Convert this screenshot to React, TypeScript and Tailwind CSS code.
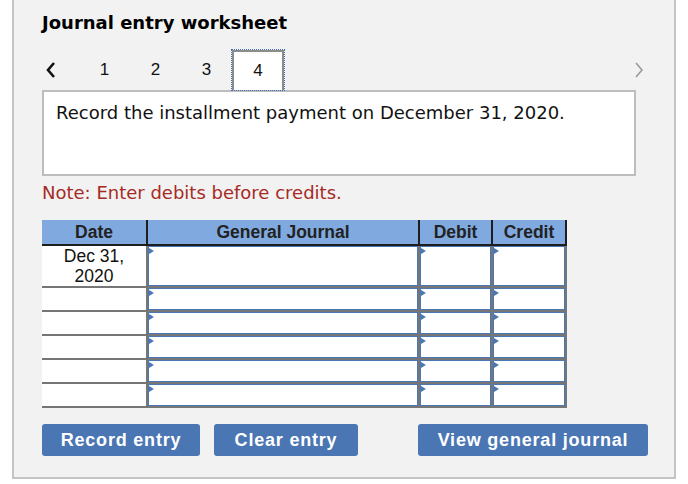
import React from 'react';

// ---------- Data ----------

const tabs = ['1', '2', '3', '4'];
const activeTab = '4';

const rows = [
  { date: 'Dec 31,\n2020', tall: true },
  { date: '', tall: false },
  { date: '', tall: false },
  { date: '', tall: false },
  { date: '', tall: false },
  { date: '', tall: false },
];

const verdana = "font-['DejaVu_Sans',Verdana,sans-serif]";
const arial = "font-['Liberation_Sans',Arial,sans-serif]";

// ---------- Pieces ----------

function EntryCell() {
  return (
    <div className="relative bg-white border border-[#4a78b4]">
      <span className="absolute left-0 top-[1px] w-0 h-0 border-y-[3px] border-y-transparent border-l-[5px] border-l-[#4a78b4]" />
    </div>
  );
}

function ActionButton({ label, width }: { label: string; width: string }) {
  return (
    <button
      className={`${width} h-[32px] rounded-[3px] bg-[#4a76b3] text-white text-[18px] font-bold tracking-[0.8px] ${arial}`}
    >
      {label}
    </button>
  );
}

// ---------- Main ----------

export default function App() {
  return (
    <div className="w-[688px] h-[484px] bg-white overflow-hidden">
      <div className="ml-[12px] w-[664px] h-[479px] bg-[#f2f2f2] border-x-2 border-b-2 border-[#c4c4c4] pl-[28px] pt-[12px]">
        <h1 className={`${verdana} text-[18px] leading-[22px] font-bold text-black`}>Journal entry worksheet</h1>

        {/* Tabs */}
        <div className="mt-[15px] flex items-end h-[42px] w-[594px] relative z-10 -mb-[1px]">
          <div className="w-[37px] h-full flex items-center pl-[3px]">
            <svg width="12" height="18" viewBox="0 0 12 18">
              <polyline points="9,2 3,9 9,16" fill="none" stroke="#111" strokeWidth="2.6" />
            </svg>
          </div>
          {tabs.map((t) =>
            t === activeTab ? (
              <div
                key={t}
                className="w-[54px] h-full border-[1.5px] border-dotted border-[#3f6fb5] -ml-[1px]"
              >
                <div
                  className={`h-full bg-white border-2 border-b-0 border-[#8c8c8c] flex items-center justify-center text-[17px] text-[#111] ${arial}`}
                >
                  {t}
                </div>
              </div>
            ) : (
              <div
                key={t}
                className={`w-[51px] h-full flex items-center justify-center text-[17px] text-[#111] ${arial}`}
              >
                {t}
              </div>
            )
          )}
          <div className="flex-1 h-full flex items-center justify-end">
            <svg width="12" height="18" viewBox="0 0 12 18" className="mr-[-9px]">
              <polyline points="3,2 9,9 3,16" fill="none" stroke="#9a9a9a" strokeWidth="1.6" />
            </svg>
          </div>
        </div>

        {/* Prompt box */}
        <div className={`w-[594px] h-[86px] bg-white border-2 border-[#bdbdbd] px-[12px] pt-[10px] ${verdana} text-[18px] leading-[22px] text-[#111]`}>
          Record the installment payment on December 31, 2020.
        </div>

        <p className={`mt-[6px] ${verdana} text-[18px] leading-[22px] text-[#a62b25]`}>Note: Enter debits before credits.</p>

        {/* Journal table */}
        <div className={`mt-[16px] w-[525px] ${arial}`}>
          <div className="grid grid-cols-[104px_270px_71px_72px] gap-x-[2px] bg-[#1e1e1e] pr-[2px] pb-[2px]">
            {['Date', 'General Journal', 'Debit', 'Credit'].map((h) => (
              <div
                key={h}
                className="h-[24px] bg-[#80aadf] flex items-center justify-center text-[17.5px] font-bold text-[#222]"
              >
                {h}
              </div>
            ))}
          </div>
          <div className="grid grid-cols-[104px_270px_71px_72px] gap-[2px] bg-[#767676] pr-[2px] pb-[2px]">
            {rows.map((r, i) => (
              <React.Fragment key={i}>
                <div
                  className={`${r.tall ? 'h-[40px]' : 'h-[22px]'} bg-white text-center text-[17.5px] leading-[20px] text-[#111] whitespace-pre-line`}
                >
                  {r.date}
                </div>
                <EntryCell />
                <EntryCell />
                <EntryCell />
              </React.Fragment>
            ))}
          </div>
        </div>

        {/* Actions */}
        <div className="mt-[16px] flex w-[606px]">
          <ActionButton label="Record entry" width="w-[158px]" />
          <div className="w-[14px]" />
          <ActionButton label="Clear entry" width="w-[144px]" />
          <div className="flex-1" />
          <ActionButton label="View general journal" width="w-[230px]" />
        </div>
      </div>
    </div>
  );
}
